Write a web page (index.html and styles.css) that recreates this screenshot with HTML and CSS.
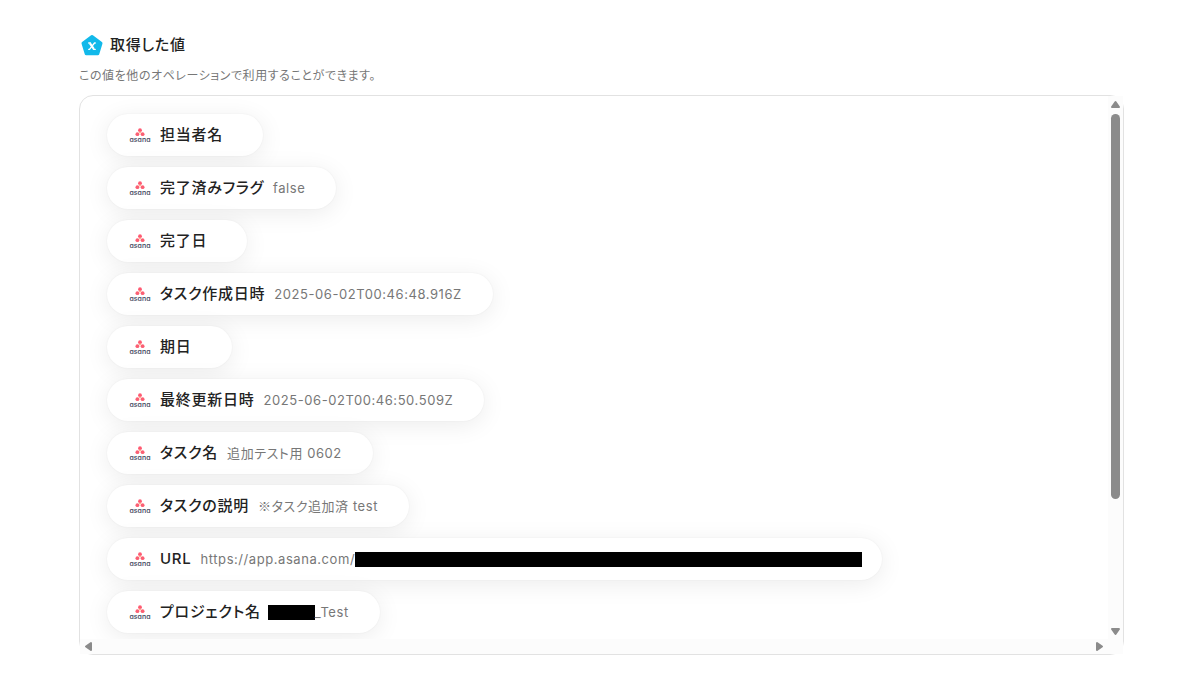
FILE: index.html
```html
<!DOCTYPE html>
<html lang="ja">
<head>
<meta charset="utf-8">
<meta name="viewport" content="width=device-width, initial-scale=1">
<title>取得した値</title>
<link rel="stylesheet" href="styles.css">
</head>
<body>
<svg class="defs" aria-hidden="true">
  <symbol id="asana" viewBox="0 0 22 16" overflow="visible">
    <circle cx="11" cy="3.200" r="1.900" fill="#ff5a72"/>
    <circle cx="8.400" cy="7.200" r="1.900" fill="#fb5f73"/>
    <circle cx="13.600" cy="7.200" r="1.900" fill="#fb5f73"/>
    <circle cx="11" cy="5.600" r="1" fill="#ffae86"/>
    <text class="logo-text" x="11" y="15" text-anchor="middle">asana</text>
  </symbol>
</svg>
<main class="page">
  <header class="heading">
    <svg class="heading-icon" viewBox="0 0 22 22" aria-hidden="true">
      <path d="M11 2.500 20 9.300 16.800 19.700H5.200L2 9.300Z" fill="#12b9ea" stroke="#12b9ea" stroke-width="3" stroke-linejoin="round"/>
      <path d="M9 9.300 12.800 15" fill="none" stroke="#fff" stroke-width="2.200"/>
      <path d="M7.700 9h1.800M12.500 15.300h1.800M14.300 9h-.8L8.500 15.300h-.8" fill="none" stroke="#fff" stroke-width="1.300" stroke-linecap="round" stroke-linejoin="round"/>
    </svg>
    <h1 class="title">取得した値</h1>
  </header>
  <p class="note">この値を他のオペレーションで利用することができます。</p>
  <section class="panel" aria-label="取得した値">
    <ul class="values">
      <li class="pill"><svg class="logo"><use href="#asana"/></svg><span class="name">担当者名</span><span class="value"></span></li>
      <li class="pill"><svg class="logo"><use href="#asana"/></svg><span class="name">完了済みフラグ</span><span class="value">false</span></li>
      <li class="pill"><svg class="logo"><use href="#asana"/></svg><span class="name">完了日</span><span class="value"></span></li>
      <li class="pill"><svg class="logo"><use href="#asana"/></svg><span class="name">タスク作成日時</span><span class="value">2025-06-02T00:46:48.916Z</span></li>
      <li class="pill"><svg class="logo"><use href="#asana"/></svg><span class="name">期日</span><span class="value"></span></li>
      <li class="pill"><svg class="logo"><use href="#asana"/></svg><span class="name">最終更新日時</span><span class="value">2025-06-02T00:46:50.509Z</span></li>
      <li class="pill"><svg class="logo"><use href="#asana"/></svg><span class="name">タスク名</span><span class="value">追加テスト用 0602</span></li>
      <li class="pill"><svg class="logo"><use href="#asana"/></svg><span class="name">タスクの説明</span><span class="value"><span class="cjk">※</span><span>タスク追加済 test</span></span></li>
      <li class="pill pill-url"><svg class="logo"><use href="#asana"/></svg><span class="name">URL</span><span class="value">https://app.asana.com/<span class="mask mask-long"></span></span></li>
      <li class="pill"><svg class="logo"><use href="#asana"/></svg><span class="name">プロジェクト名</span><span class="value"><span class="mask mask-short"></span>_Test</span></li>
    </ul>
    <div class="bar bar-y" aria-hidden="true">
      <svg class="arrow" viewBox="0 0 11 9"><path d="M5.500 2 9 7H2Z"/></svg>
      <div class="rail"><div class="thumb"></div></div>
      <svg class="arrow" viewBox="0 0 11 9"><path d="M5.500 7 9 2H2Z"/></svg>
    </div>
    <div class="bar bar-x" aria-hidden="true">
      <svg class="arrow-x" viewBox="0 0 9 11"><path d="M2 5.500 7 2v7Z"/></svg>
      <svg class="arrow-x" viewBox="0 0 9 11"><path d="M7 5.500 2 2v7Z"/></svg>
    </div>
    <div class="corner"></div>
  </section>
</main>
</body>
</html>
```

FILE: styles.css
```css
* {
  box-sizing: border-box;
}

body {
  margin: 0;
  background: #fff;
  color: #222;
  font-family: Inter, "Noto Sans CJK JP", sans-serif;
  font-feature-settings: "palt";
  letter-spacing: 0.035em;
}

.defs {
  display: none;
}

.page {
  display: flex;
  flex-direction: column;
  height: 100vh;
  padding: 33px 60px 37px 79px;
}

.heading {
  display: flex;
  align-items: center;
  gap: 7px;
  padding-left: 2px;
}

.heading-icon {
  width: 22px;
  height: 24px;
}

.title {
  margin: 0;
  font-size: 15px;
  font-weight: 500;
  letter-spacing: 0.05em;
  line-height: 24px;
}

.note {
  margin: 10px 0;
  color: #777;
  font-size: 12px;
  line-height: 18px;
}

.panel {
  display: grid;
  flex: 1;
  grid-template-columns: minmax(0, 1fr) 15px;
  grid-template-rows: minmax(0, 1fr) 15px;
  min-height: 0;
  border: 1px solid #e2e2e2;
  border-radius: 14px;
}

.values {
  display: flex;
  flex-direction: column;
  align-items: flex-start;
  gap: 11px;
  margin: 0;
  padding: 18px 27px 0;
  overflow: hidden;
  border-top-left-radius: 13px;
  list-style: none;
}

.pill {
  display: flex;
  flex: none;
  align-items: center;
  gap: 9px;
  height: 42px;
  padding: 0 31px 0 22px;
  border-radius: 21px;
  background: #fff;
  box-shadow: 0 4px 24px rgba(0, 0, 0, 0.08), 0 0 2px rgba(0, 0, 0, 0.06);
  white-space: nowrap;
}

.pill-url {
  padding-right: 20px;
}

.logo {
  width: 22px;
  height: 16px;
  overflow: visible;
}

.logo-text {
  fill: #3b4358;
  font-family: Inter, sans-serif;
  font-feature-settings: "cv11";
  font-size: 7px;
  font-weight: 500;
  letter-spacing: 0;
}

.name {
  font-size: 15px;
  font-weight: 500;
  letter-spacing: 0.05em;
  line-height: 22px;
}

.value {
  display: flex;
  align-items: center;
  color: #777;
  font-size: 13px;
  line-height: 20px;
}

.cjk {
  font-family: "Noto Sans CJK JP", sans-serif;
}

.mask {
  height: 15px;
  background: #000;
}

.mask-long {
  width: 507px;
}

.mask-short {
  width: 47px;
  margin-left: -2px;
}

.bar {
  display: flex;
  align-items: center;
  justify-content: space-between;
  background: #fcfcfc;
}

.bar-y {
  flex-direction: column;
  padding: 4px 0 3px;
}

.bar-x {
  padding: 0 4px;
}

.arrow,
.arrow-x {
  fill: #8b8b8b;
  stroke: #8b8b8b;
  stroke-width: 2px;
  stroke-linejoin: round;
}

.arrow {
  width: 11px;
  height: 9px;
}

.arrow-x {
  width: 9px;
  height: 11px;
}

.rail {
  flex: 1;
  width: 9px;
  margin-top: 5px;
}

.thumb {
  height: 75%;
  border-radius: 5px;
  background: #8b8b8b;
}

.corner {
  background: #fcfcfc;
}
```
